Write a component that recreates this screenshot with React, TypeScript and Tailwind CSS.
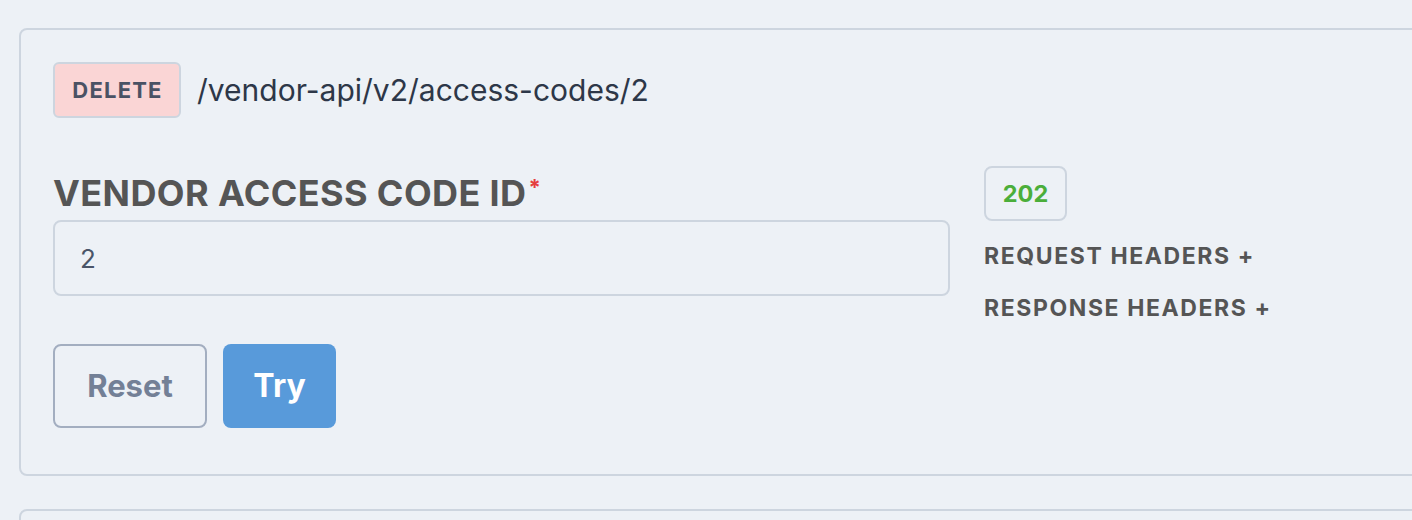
const font = { fontFamily: "Inter, 'Noto Sans', sans-serif" };

export default function App() {
  return (
    <div
      className="w-[1412px] h-[520px] overflow-hidden bg-[#edf1f6] pt-[28px] pl-[19px]"
      style={font}
    >
      {/* endpoint card */}
      <div className="w-[1800px] rounded-lg border-2 border-[#cdd5df] bg-[#edf1f6] px-8 pt-[32px] pb-[46px]">
        {/* method + path */}
        <div className="flex items-center gap-4">
          <span className="flex h-[56px] w-[128px] items-center justify-center rounded-md border-2 border-[#cdd5df] bg-[#fad5d5] pl-[1px] text-[22px] font-bold tracking-[1.2px] text-[#4a5264]">
            DELETE
          </span>
          <span className="text-[30px] text-[#2d3748]">/vendor-api/v2/access-codes/2</span>
        </div>

        {/* form + response */}
        <div className="mt-[48px] grid grid-cols-[897px_1fr] gap-[34px]">
          <div>
            <label className="block text-[36px] font-bold leading-[54px] tracking-[0.4px] text-[#555555]">
              VENDOR ACCESS CODE ID
              <sup className="ml-[2px] text-[22px] text-[#e53e3e]">*</sup>
            </label>
            <div className="flex h-[76px] items-center rounded-lg border-2 border-[#cdd5df] px-[25px] text-[26px] text-[#4a5568]">
              2
            </div>
            <div className="mt-[48px] flex gap-4">
              <button className="h-[84px] w-[154px] rounded-lg border-2 border-[#a3aec0] text-[31px] font-bold text-[#738096]">
                Reset
              </button>
              <button className="h-[84px] w-[113px] rounded-lg bg-[#589ada] text-[32px] font-bold text-white">
                Try
              </button>
            </div>
          </div>

          <div className="flex flex-col items-start">
            <span className="flex h-[55px] w-[83px] items-center justify-center rounded-lg border-2 border-[#cdd5df] text-[23.5px] font-bold text-[#4bae3a]">
              202
            </span>
            <div className="mt-[9px] text-[23px] font-bold leading-[52px] tracking-[1.6px] text-[#555555]">
              REQUEST HEADERS +
            </div>
            <div className="text-[23px] font-bold leading-[52px] tracking-[1.6px] text-[#555555]">
              RESPONSE HEADERS +
            </div>
          </div>
        </div>
      </div>

      {/* next card */}
      <div className="mt-[33px] h-[60px] w-[1800px] rounded-lg border-2 border-[#cdd5df]" />
    </div>
  );
}
